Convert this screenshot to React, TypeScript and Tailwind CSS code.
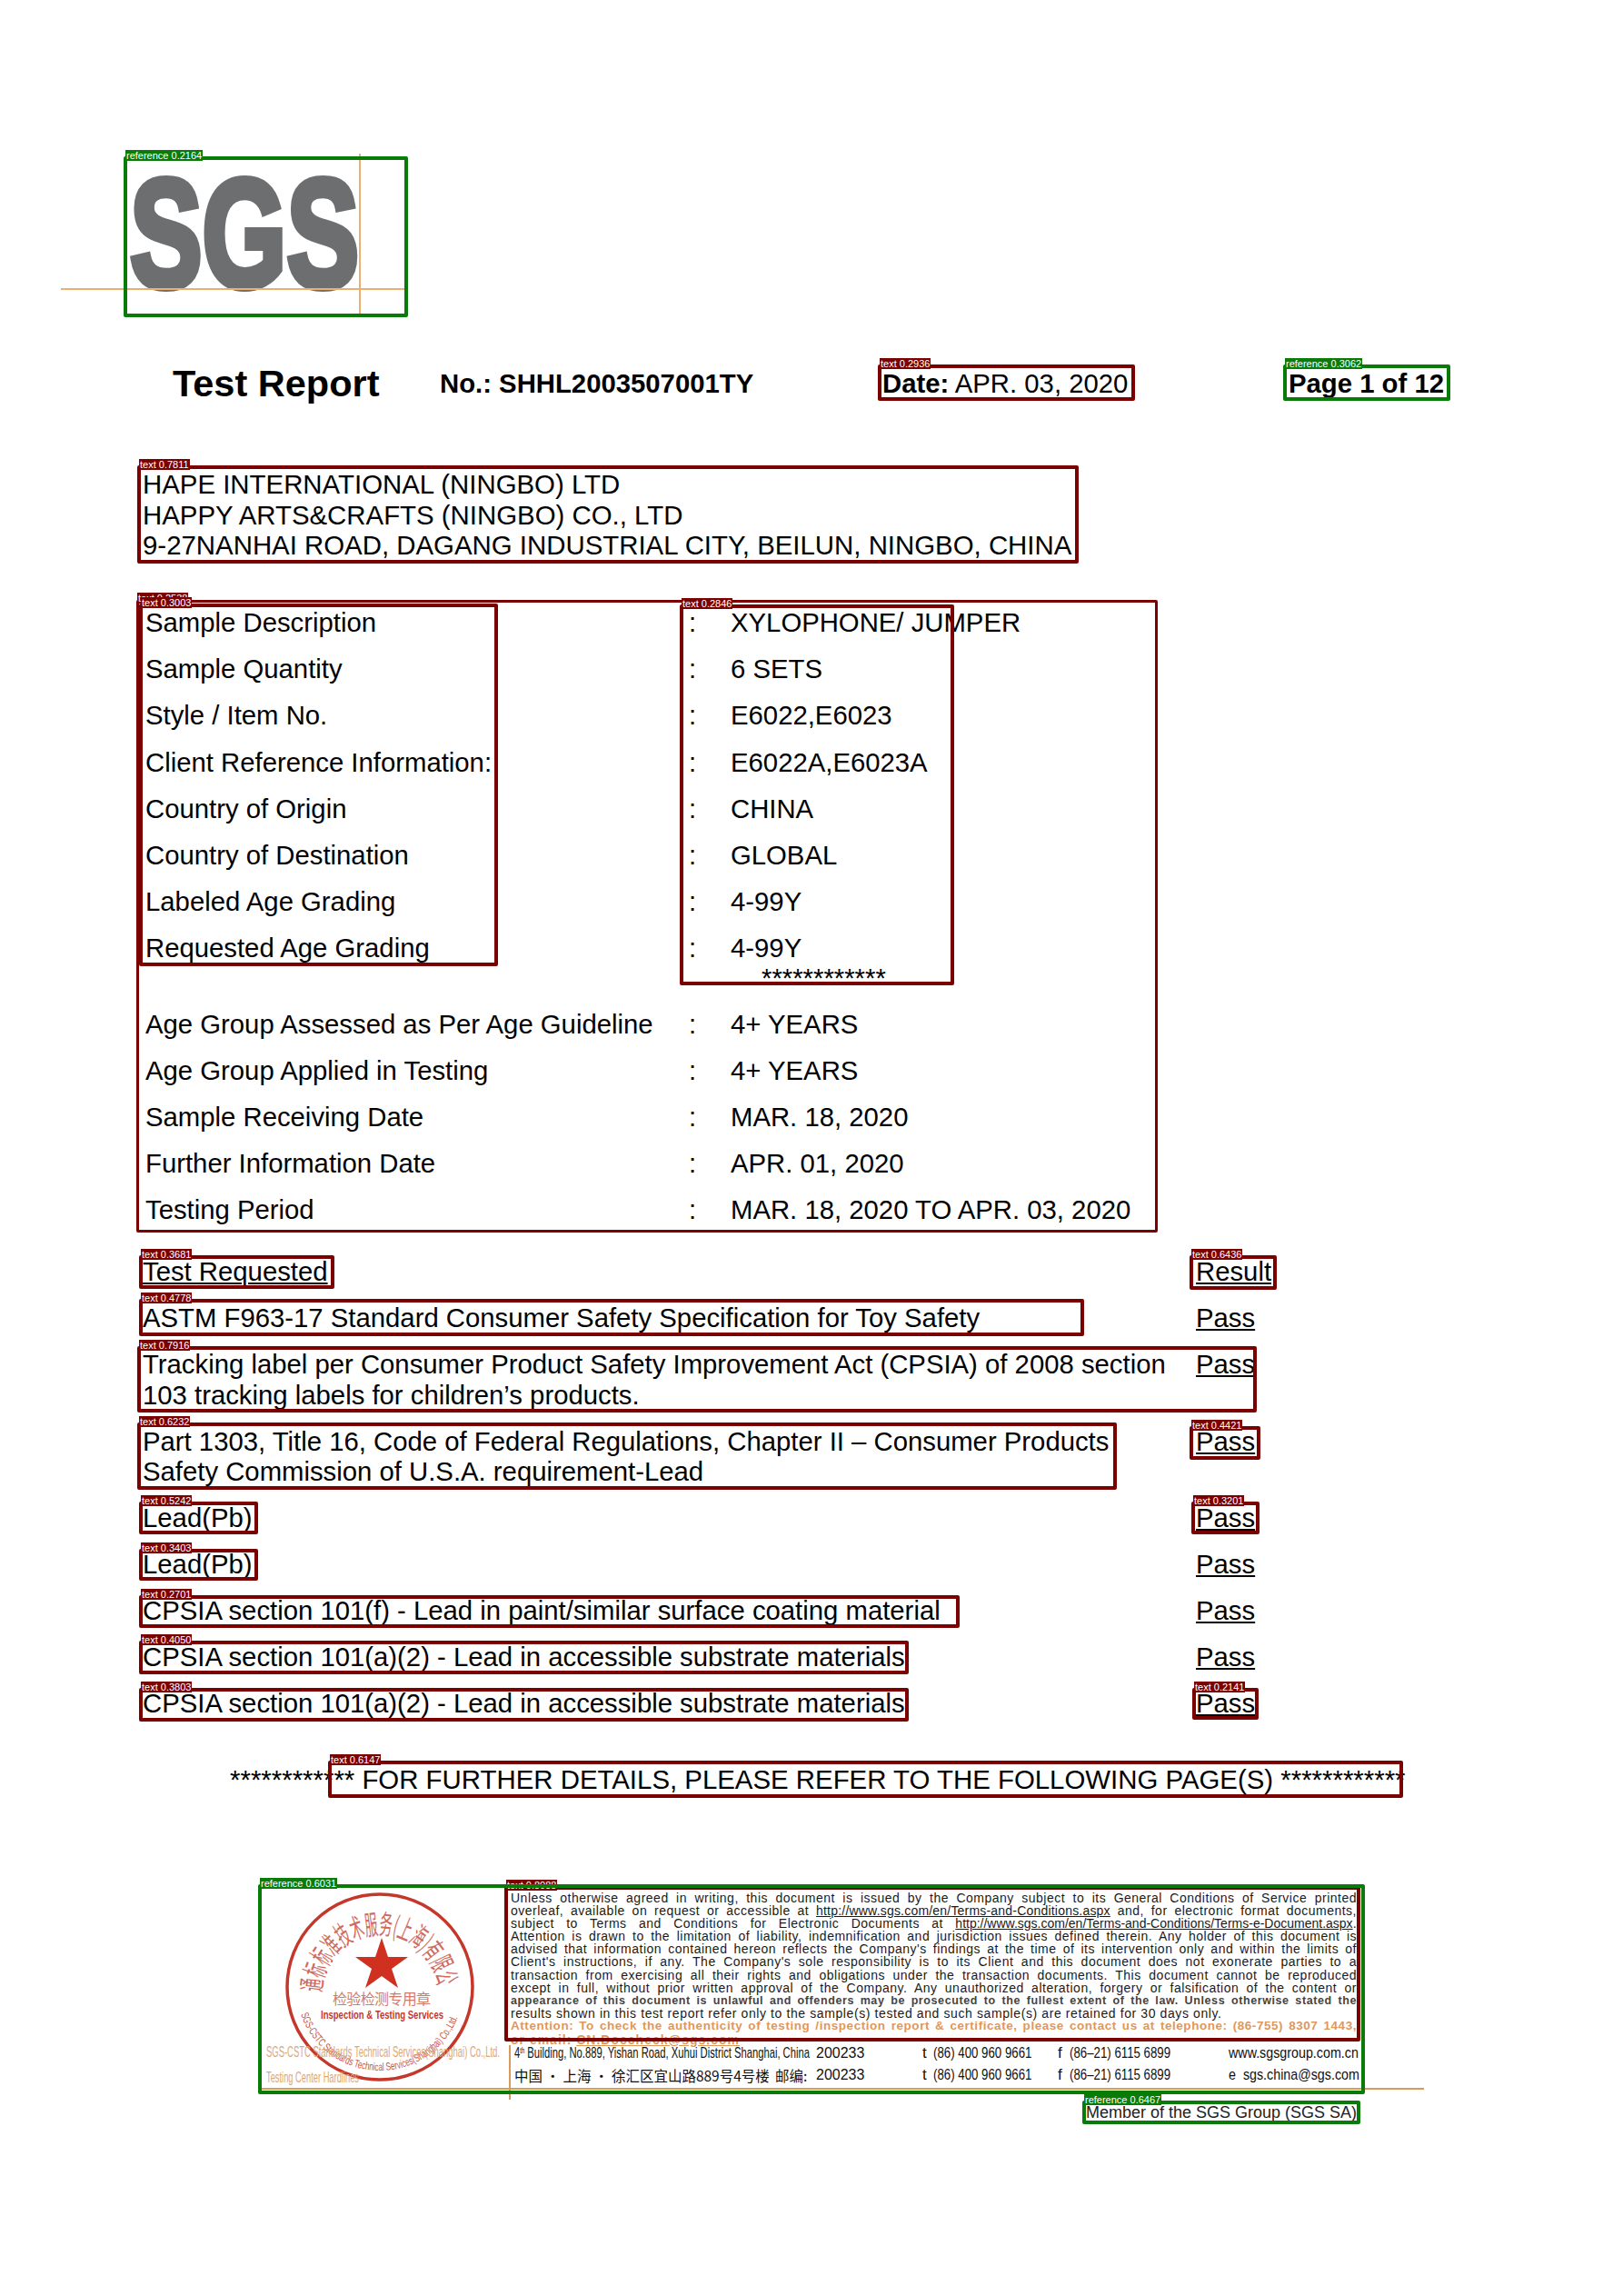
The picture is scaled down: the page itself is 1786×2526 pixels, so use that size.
const sampleRows = [
  ["Sample Description", "XYLOPHONE/ JUMPER"],
  ["Sample Quantity", "6 SETS"],
  ["Style / Item No.", "E6022,E6023"],
  ["Client Reference Information:", "E6022A,E6023A"],
  ["Country of Origin", "CHINA"],
  ["Country of Destination", "GLOBAL"],
  ["Labeled Age Grading", "4-99Y"],
  ["Requested Age Grading", "4-99Y"],
];

const ageRows = [
  ["Age Group Assessed as Per Age Guideline", "4+ YEARS"],
  ["Age Group Applied in Testing", "4+ YEARS"],
  ["Sample Receiving Date", "MAR. 18, 2020"],
  ["Further Information Date", "APR. 01, 2020"],
  ["Testing Period", "MAR. 18, 2020 TO APR. 03, 2020"],
];

const testRows = [
  ["ASTM F963-17 Standard Consumer Safety Specification for Toy Safety"],
  [
    "Tracking label per Consumer Product Safety Improvement Act (CPSIA) of 2008 section",
    "103 tracking labels for children’s products.",
  ],
  [
    "Part 1303, Title 16, Code of Federal Regulations, Chapter II – Consumer Products",
    "Safety Commission of U.S.A. requirement-Lead",
  ],
  ["Lead(Pb)"],
  ["Lead(Pb)"],
  ["CPSIA section 101(f) - Lead in paint/similar surface coating material"],
  ["CPSIA section 101(a)(2) - Lead in accessible substrate materials"],
  ["CPSIA section 101(a)(2) - Lead in accessible substrate materials"],
];

function InfoRow({ label, value }: { label: string; value: string }) {
  return (
    <div className="flex h-[51.2px] items-center text-[29.3px] leading-[34px]">
      <div className="w-[598px] whitespace-nowrap">{label}</div>
      <div className="w-[46px]">:</div>
      <div className="whitespace-nowrap">{value}</div>
    </div>
  );
}

function Box({ className, label, green }: { className: string; label: string; green?: boolean }) {
  const color = green ? "border-[#087b08]" : "border-[#7b0000]";
  const labelColor = green ? "bg-[#087b08]" : "bg-[#7b0000]";
  return (
    <div className={`absolute rounded-[2px] ${color} ${className}`}>
      <span
        className={`absolute -left-[2px] -top-[11px] h-[12px] whitespace-nowrap px-[1px] text-[11px] leading-[12px] text-white ${labelColor}`}
      >
        {label}
      </span>
    </div>
  );
}

function Seal() {
  return (
    <svg width="271" height="231" viewBox="0 0 271 231" className="block shrink-0 overflow-visible">
      <defs>
        <path id="sealTop" d="M 70 120 A 64 64 0 1 1 198 120" />
        <path id="sealBottom" d="M 47 144 A 92 92 0 0 0 221 144" />
      </defs>
      <circle cx="134" cy="114" r="102" fill="none" stroke="#c4372a" strokeWidth="3.5" />
      <polygon
        points="136,60 143,81 165,81 147,94 154,115 136,102 118,115 125,94 107,81 129,81"
        fill="#d0301f"
      />
      <text fontSize="30" fill="#cf6a5e" fontFamily="'Noto Sans CJK SC', sans-serif">
        <textPath href="#sealTop" textLength="208" lengthAdjust="spacingAndGlyphs">
          通标标准技术服务(上海)有限公司
        </textPath>
      </text>
      <text fontSize="12" fill="#c9564a" fontFamily="'Liberation Sans', sans-serif">
        <textPath href="#sealBottom" textLength="224" lengthAdjust="spacingAndGlyphs">
          SGS-CSTC Standards Technical Services(Shanghai) Co.,Ltd.
        </textPath>
      </text>
      <text x="82" y="133" fontSize="16" fill="#cf7c6c" fontFamily="'Noto Sans CJK SC', sans-serif" textLength="108">
        检验检测专用章
      </text>
      <text
        x="69"
        y="149"
        fontSize="13"
        fontWeight="700"
        fill="#c4372a"
        fontFamily="'Liberation Sans', sans-serif"
        textLength="135"
        lengthAdjust="spacingAndGlyphs"
      >
        Inspection &amp; Testing Services
      </text>
      <text
        x="9"
        y="191"
        fontSize="17"
        fill="#d9a878"
        fontFamily="'Liberation Sans', sans-serif"
        textLength="257"
        lengthAdjust="spacingAndGlyphs"
      >
        SGS-CSTC Standards Technical Services(Shanghai) Co.,Ltd.
      </text>
      <text
        x="9"
        y="219"
        fontSize="17"
        fill="#d9a878"
        fontFamily="'Liberation Sans', sans-serif"
        textLength="102"
        lengthAdjust="spacingAndGlyphs"
      >
        Testing Center Hardlines
      </text>
    </svg>
  );
}

function Disclaimer() {
  const line = "h-[14.2px] whitespace-nowrap leading-[14.2px] [text-align-last:justify]";
  return (
    <div className="w-[931px] text-[14px] tracking-[0.5px] text-[#1a1a1a]">
      <div className={line}>
        Unless otherwise agreed in writing, this document is issued by the Company subject to its General Conditions of
        Service printed
      </div>
      <div className={line}>
        overleaf, available on request or accessible at{" "}
        <span className="tracking-[0.2px] underline">http://www.sgs.com/en/Terms-and-Conditions.aspx</span> and, for
        electronic format documents,
      </div>
      <div className={line}>
        subject to Terms and Conditions for Electronic Documents at{" "}
        <span className="tracking-[0px] underline">http://www.sgs.com/en/Terms-and-Conditions/Terms-e-Document.aspx</span>.
      </div>
      <div className={line}>
        Attention is drawn to the limitation of liability, indemnification and jurisdiction issues defined therein. Any
        holder of this document is
      </div>
      <div className={line}>
        advised that information contained hereon reflects the Company's findings at the time of its intervention only
        and within the limits of
      </div>
      <div className={line}>
        Client's instructions, if any. The Company's sole responsibility is to its Client and this document does not
        exonerate parties to a
      </div>
      <div className={line}>
        transaction from exercising all their rights and obligations under the transaction documents. This document
        cannot be reproduced
      </div>
      <div className={line}>
        except in full, without prior written approval of the Company. Any unauthorized alteration, forgery or
        falsification of the content or
      </div>
      <div className={`${line} text-[12.5px] font-bold tracking-[0.6px] text-[#444]`}>
        appearance of this document is unlawful and offenders may be prosecuted to the fullest extent of the law. Unless
        otherwise stated the
      </div>
      <div className="h-[14.2px] whitespace-nowrap leading-[14.2px] tracking-[0.6px]">
        results shown in this test report refer only to the sample(s) tested and such sample(s) are retained for 30 days
        only.
      </div>
      <div className={`${line} text-[13.5px] font-bold tracking-[0.55px] text-[#e0975a]`}>
        Attention: To check the authenticity of testing /inspection report &amp; certificate, please contact us at
        telephone: (86-755) 8307 1443,
      </div>
      <div className="h-[14.2px] whitespace-nowrap font-bold leading-[14.2px] tracking-[1px] text-[#e0975a]">
        or email: <span className="underline">CN.Doccheck@sgs.com</span>
      </div>
    </div>
  );
}

function ContactLine({
  address,
  code,
  phone,
  fax,
  web,
}: {
  address: React.ReactNode;
  code: string;
  phone: string;
  fax: string;
  web: React.ReactNode;
}) {
  return (
    <div className="flex h-[24px] items-center whitespace-nowrap text-[17px] leading-[24px] text-[#111]">
      <div className="w-[332px]">{address}</div>
      <div className="w-[117px] text-[16px]">{code}</div>
      <div className="w-[149px]">
        t
        <span className="ml-[7px] inline-block w-[136px] origin-left scale-x-[0.78]">{phone}</span>
      </div>
      <div className="w-[188px]">
        f
        <span className="ml-[8px] inline-block w-[170px] origin-left scale-x-[0.78]">{fax}</span>
      </div>
      <div className="w-[141px]">{web}</div>
    </div>
  );
}

export default function App() {
  return (
    <div className="relative h-[2526px] w-[1786px] overflow-hidden bg-white font-['Liberation_Sans','Noto_Sans_CJK_SC',sans-serif] text-black">
      {/* SGS logo */}
      <div className="pl-[143px] pt-[193px]">
        <svg width="252" height="125" viewBox="0 0 252 125" className="block overflow-visible">
          <text
            x="0"
            y="122"
            fontSize="168"
            fontWeight="700"
            fill="#6d6e70"
            stroke="#6d6e70"
            strokeWidth="8"
            fontFamily="'Liberation Sans', sans-serif"
            textLength="252"
            lengthAdjust="spacingAndGlyphs"
          >
            SGS
          </text>
        </svg>
      </div>

      {/* Title row */}
      <div className="ml-[190px] mt-[84px] flex h-[40px] items-center whitespace-nowrap">
        <div className="w-[294px] text-[41.5px] font-bold leading-[40px]">Test Report</div>
        <div className="w-[487px] text-[29.3px] font-bold leading-[40px]">No.: SHHL2003507001TY</div>
        <div className="w-[447px] text-[29.3px] leading-[40px]">
          <b>Date:</b> APR. 03, 2020
        </div>
        <div className="text-[29.3px] font-bold leading-[40px]">Page 1 of 12</div>
      </div>

      {/* Applicant */}
      <div className="ml-[157px] mt-[74px] whitespace-nowrap text-[29.4px] leading-[33.5px]">
        <div>HAPE INTERNATIONAL (NINGBO) LTD</div>
        <div>HAPPY ARTS&amp;CRAFTS (NINGBO) CO., LTD</div>
        <div>9-27NANHAI ROAD, DAGANG INDUSTRIAL CITY, BEILUN, NINGBO, CHINA</div>
      </div>

      {/* Sample information */}
      <div className="ml-[160px] mt-[43px]">
        {sampleRows.map(([label, value], i) => (
          <InfoRow key={i} label={label} value={value} />
        ))}
        <div className="h-[32px] pl-[678px] text-[29.3px] leading-[14px]">************</div>
        {ageRows.map(([label, value], i) => (
          <InfoRow key={i} label={label} value={value} />
        ))}
      </div>

      {/* Test results */}
      <div className="ml-[157px] mt-[25px] flex flex-col gap-[17.3px] text-[29.3px] leading-[33.7px]">
        <div className="flex">
          <div className="w-[1159px] underline decoration-2 underline-offset-2">Test Requested</div>
          <div className="underline decoration-2 underline-offset-2">Result</div>
        </div>
        {testRows.map((lines, i) => (
          <div key={i} className="flex">
            <div className="w-[1159px] whitespace-nowrap">
              {lines.map((text) => (
                <div key={text}>{text}</div>
              ))}
            </div>
            <div className="underline decoration-2 underline-offset-2">Pass</div>
          </div>
        ))}
      </div>

      <div className="ml-[253px] mt-[50px] whitespace-nowrap text-[29.4px] leading-[34px]">
        ************ FOR FURTHER DETAILS, PLEASE REFER TO THE FOLLOWING PAGE(S) ************
      </div>

      {/* Footer */}
      <div className="ml-[284px] mt-[96.5px] flex">
        <Seal />
        <div className="pl-[7px] pt-[9px]">
          <Disclaimer />
          <div className="-mt-[4px] pl-[4px]">
            <ContactLine
              address={
                <span className="inline-block origin-left scale-x-[0.66]">
                  4<sup className="text-[9px]">th</sup> Building, No.889, Yishan Road, Xuhui District Shanghai, China
                </span>
              }
              code="200233"
              phone="(86) 400 960 9661"
              fax="(86–21) 6115 6899"
              web={
                <span className="inline-block origin-left scale-x-[0.84]">www.sgsgroup.com.cn</span>
              }
            />
            <ContactLine
              address={
                <span className="flex font-['Noto_Sans_CJK_SC',sans-serif] text-[15.5px]">
                  <span className="w-[287px]">中国 · 上海 · 徐汇区宜山路889号4号楼</span>
                  <span>邮编:</span>
                </span>
              }
              code="200233"
              phone="(86) 400 960 9661"
              fax="(86–21) 6115 6899"
              web={
                <span className="inline-block origin-left scale-x-[0.84]">e&nbsp;&nbsp;sgs.china@sgs.com</span>
              }
            />
          </div>
        </div>
      </div>

      <div className="mr-[293px] mt-[9px] text-right text-[18px] leading-[24px] text-[#222]">
        Member of the SGS Group (SGS SA)
      </div>

      {/* Guide lines left on the document */}
      <div className="absolute left-[67px] top-[317px] h-[2px] w-[382px] bg-[#e9b071]" />
      <div className="absolute left-[395px] top-[169px] h-[180px] w-[2px] bg-[#e9b071]" />
      <div className="absolute left-[284px] top-[2297px] h-[2px] w-[1283px] bg-[#d99a5e]" />
      <div className="absolute left-[560px] top-[2250px] h-[60px] w-[2px] bg-[#d99a5e]" />

      {/* Detection overlay */}
      <Box green className="left-[136px] top-[172px] h-[177px] w-[313px] border-4" label="reference 0.2164" />
      <Box className="left-[966px] top-[401px] h-[40px] w-[283px] border-4" label="text 0.2936" />
      <Box green className="left-[1412px] top-[401px] h-[40px] w-[184px] border-4" label="reference 0.3062" />
      <Box className="left-[151px] top-[512px] h-[108px] w-[1036px] border-4" label="text 0.7811" />
      <Box className="left-[150px] top-[660px] h-[696px] w-[1124px] border-[3px]" label="text 0.2538" />
      <Box className="left-[153px] top-[664px] h-[399px] w-[395px] border-4" label="text 0.3003" />
      <Box className="left-[748px] top-[665px] h-[419px] w-[302px] border-4" label="text 0.2846" />
      <Box className="left-[153px] top-[1381px] h-[37px] w-[215px] border-4" label="text 0.3681" />
      <Box className="left-[1309px] top-[1381px] h-[38px] w-[96px] border-4" label="text 0.6436" />
      <Box className="left-[153px] top-[1429px] h-[41px] w-[1040px] border-4" label="text 0.4778" />
      <Box className="left-[151px] top-[1481px] h-[73px] w-[1232px] border-4" label="text 0.7916" />
      <Box className="left-[151px] top-[1565px] h-[74px] w-[1078px] border-4" label="text 0.6232" />
      <Box className="left-[1309px] top-[1569px] h-[37px] w-[78px] border-4" label="text 0.4421" />
      <Box className="left-[153px] top-[1652px] h-[36px] w-[131px] border-4" label="text 0.5242" />
      <Box className="left-[1311px] top-[1652px] h-[36px] w-[75px] border-4" label="text 0.3201" />
      <Box className="left-[153px] top-[1704px] h-[35px] w-[131px] border-4" label="text 0.3403" />
      <Box className="left-[153px] top-[1755px] h-[36px] w-[903px] border-4" label="text 0.2701" />
      <Box className="left-[153px] top-[1805px] h-[37px] w-[847px] border-4" label="text 0.4050" />
      <Box className="left-[153px] top-[1857px] h-[37px] w-[847px] border-4" label="text 0.3803" />
      <Box className="left-[1312px] top-[1857px] h-[35px] w-[73px] border-4" label="text 0.2141" />
      <Box className="left-[361px] top-[1937px] h-[41px] w-[1183px] border-4" label="text 0.6147" />
      <Box className="left-[555px] top-[2075px] h-[171px] w-[942px] border-4" label="text 0.8088" />
      <Box green className="left-[284px] top-[2073px] h-[231px] w-[1218px] border-4" label="reference 0.6031" />
      <Box green className="left-[1191px] top-[2311px] h-[26px] w-[306px] border-4" label="reference 0.6467" />
    </div>
  );
}
